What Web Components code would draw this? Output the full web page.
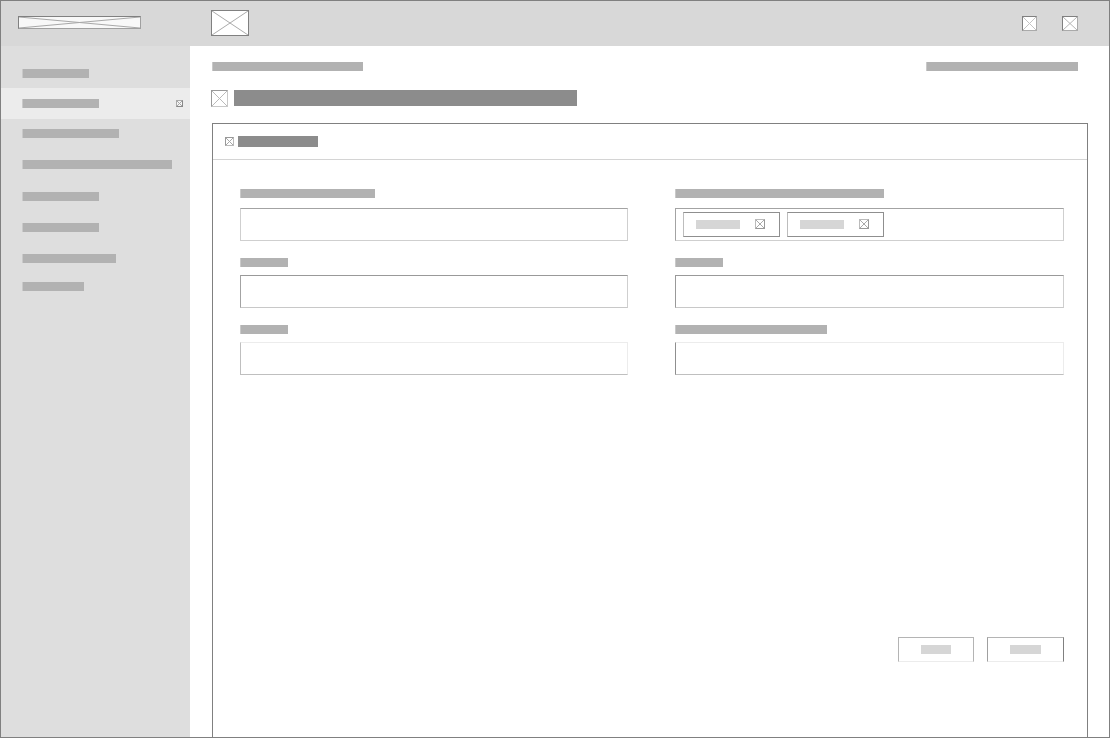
<!DOCTYPE html>
<html>
<head>
<meta charset="utf-8">
<style>
  html, body { margin: 0; padding: 0; background: #fff; font-family: "Liberation Sans", sans-serif; }
</style>
</head>
<body>
<app-shell>
  <app-header slot="header"></app-header>
  <side-nav slot="nav">
    <nav-item height="42" pad="23" bar="67"></nav-item>
    <nav-item height="31" pad="11" bar="77" active></nav-item>
    <nav-item height="31" pad="10" bar="97"></nav-item>
    <nav-item height="31" pad="10" bar="150"></nav-item>
    <nav-item height="31" pad="11" bar="77"></nav-item>
    <nav-item height="31" pad="11" bar="77"></nav-item>
    <nav-item height="31" pad="11" bar="94"></nav-item>
    <nav-item height="31" pad="8" bar="62"></nav-item>
  </side-nav>
  <page-head slot="main"></page-head>
  <form-card slot="main">
    <form-field label="135">
      <box-input top="#a3a3a3" side="#cfcfcf" end="#cfcfcf" bottom="#cfcfcf"></box-input>
    </form-field>
    <form-field label="209">
      <box-input top="#a3a3a3" side="#a3a3a3" end="#cfcfcf" bottom="#cfcfcf">
        <tag-chip bar="44"></tag-chip>
        <tag-chip bar="44"></tag-chip>
      </box-input>
    </form-field>
    <form-field label="48" gap="8" style="margin-top:1px">
      <box-input top="#999" side="#a3a3a3" end="#cfcfcf" bottom="#c8c8c8"></box-input>
    </form-field>
    <form-field label="48" gap="8" style="margin-top:1px">
      <box-input top="#999" side="#999" end="#cfcfcf" bottom="#c8c8c8"></box-input>
    </form-field>
    <form-field label="48" gap="8" style="margin-top:1px">
      <box-input top="#ececec" side="#bfbfbf" end="#ececec" bottom="#bfbfbf"></box-input>
    </form-field>
    <form-field label="152" gap="8" style="margin-top:1px">
      <box-input top="#ececec" side="#8f8f8f" end="#ececec" bottom="#bfbfbf"></box-input>
    </form-field>
    <action-button slot="actions" bar="30" style="margin-right:13px"></action-button>
    <action-button slot="actions" bar="31" strong></action-button>
  </form-card>
</app-shell>

<script>
// grey block standing in for a redacted line of text
class RedactBar extends HTMLElement {
  connectedCallback() {
    if (this.shadowRoot) return;
    const root = this.attachShadow({ mode: "open" });
    const w = this.getAttribute("w");
    const h = this.getAttribute("h") || 9;
    const tone = this.getAttribute("tone");
    // the plain label bars have a soft left edge in the wireframe
    const edge = tone ? "none" : "inset 1px 0 0 rgba(255,255,255,.3)";
    root.innerHTML = `<style>
      :host { display: block; flex: none; width: ${w}px; height: ${h}px; background: ${tone || "#b2b2b2"}; box-shadow: ${edge}; }
    </style>`;
  }
}

// wireframe image placeholder: a box with two crossing lines
class PlaceholderIcon extends HTMLElement {
  connectedCallback() {
    if (this.shadowRoot) return;
    const root = this.attachShadow({ mode: "open" });
    const w = this.getAttribute("w");
    const h = this.getAttribute("h");
    const line = this.getAttribute("line") || "#a8a8a8";
    const fill = this.getAttribute("fill") || "#fff";
    const top = this.getAttribute("top") || "#808080";
    const low = this.getAttribute("low") || "#808080";
    root.innerHTML = `<style>
      :host { display: block; flex: none; width: ${w}px; height: ${h}px; box-sizing: border-box;
        background: ${fill}; border: 1px solid; border-color: ${top} ${low} ${low} ${top}; }
      svg { display: block; width: 100%; height: 100%; }
    </style>
    <svg viewBox="0 0 ${w - 2} ${h - 2}" preserveAspectRatio="none">
      <path d="M0 0L${w - 2} ${h - 2}M${w - 2} 0L0 ${h - 2}" stroke="${line}" stroke-width="1" fill="none"/>
    </svg>`;
  }
}

class AppShell extends HTMLElement {
  constructor() {
    super();
    this.attachShadow({ mode: "open" }).innerHTML = `<style>
      :host { display: grid; box-sizing: border-box; width: 1110px; height: 738px; overflow: hidden;
        border: 1px solid #808080; grid-template: 45px 1fr / 189px 1fr; background: #fff; }
      .top { grid-column: 1 / 3; display: block; }
      .main { display: flex; flex-direction: column; min-height: 0; }
    </style>
    <div class="top"><slot name="header"></slot></div>
    <div><slot name="nav"></slot></div>
    <div class="main"><slot name="main"></slot></div>`;
  }
}

class AppHeader extends HTMLElement {
  constructor() {
    super();
    this.attachShadow({ mode: "open" }).innerHTML = `<style>
      :host { display: flex; align-items: flex-start; height: 45px; background: #d8d8d8; padding: 9px 31px 0 17px; box-sizing: border-box; }
      .logo { margin: 6px 70px 0 0; }
      .spacer { flex: 1; }
      .act { margin-top: 6px; }
      .act + .act { margin-left: 25px; }
    </style>
    <placeholder-icon class="logo" w="123" h="13" low="#a0a0a0" fill="#f8f8f8"></placeholder-icon>
    <placeholder-icon w="38" h="26" line="#aaa"></placeholder-icon>
    <div class="spacer"></div>
    <placeholder-icon class="act" w="15" h="15" line="#c4c4c4" low="#aaa"></placeholder-icon>
    <placeholder-icon class="act" w="16" h="15" line="#b4b4b4" low="#aaa"></placeholder-icon>`;
  }
}

class SideNav extends HTMLElement {
  constructor() {
    super();
    this.attachShadow({ mode: "open" }).innerHTML = `<style>
      :host { display: block; height: 100%; background: #dedede; }
    </style><slot></slot>`;
  }
}

class NavItem extends HTMLElement {
  connectedCallback() {
    if (this.shadowRoot) return;
    const root = this.attachShadow({ mode: "open" });
    const active = this.hasAttribute("active");
    root.innerHTML = `<style>
      :host { display: flex; justify-content: space-between; align-items: flex-start; box-sizing: border-box;
        height: ${this.getAttribute("height")}px; padding: ${this.getAttribute("pad")}px 7px 0 21px;
        background: ${active ? "#ececec" : "transparent"}; }
      .mark { margin-top: 1px; }
    </style>
    <redact-bar w="${this.getAttribute("bar")}"></redact-bar>
    ${active ? '<placeholder-icon class="mark" w="7" h="7" fill="#f4f4f4" top="#aaa" low="#888"></placeholder-icon>' : ""}`;
  }
}

class PageHead extends HTMLElement {
  constructor() {
    super();
    this.attachShadow({ mode: "open" }).innerHTML = `<style>
      :host { display: block; flex: none; padding: 16px 31px 0 21px; }
      .crumbs { display: flex; justify-content: space-between; padding-left: 1px; margin-bottom: 19px; }
      .title { display: flex; gap: 6px; margin-bottom: 16px; }
    </style>
    <div class="crumbs">
      <redact-bar w="151"></redact-bar>
      <redact-bar w="152"></redact-bar>
    </div>
    <div class="title">
      <placeholder-icon w="17" h="17" top="#999" low="#c8c8c8" line="#bbb"></placeholder-icon>
      <redact-bar w="343" h="16" tone="#8c8c8c"></redact-bar>
    </div>`;
  }
}

class FormCard extends HTMLElement {
  constructor() {
    super();
    this.attachShadow({ mode: "open" }).innerHTML = `<style>
      :host { display: flex; flex-direction: column; flex: 1; box-sizing: border-box; width: 876px; margin-left: 22px;
        border: 1px solid #808080; border-bottom: 0; }
      header { display: flex; align-items: center; gap: 4px; height: 36px; padding-left: 12px;
        box-sizing: border-box; border-bottom: 1px solid #d4d4d4; }
      .fields { display: grid; grid-template-columns: 388px 389px; column-gap: 47px; row-gap: 16px; padding: 29px 23px 0 27px; align-content: start; }
      .actions { display: flex; justify-content: flex-end; padding: 262px 23px 0 0; }
    </style>
    <header>
      <placeholder-icon w="9" h="9" top="#999" low="#bbb"></placeholder-icon>
      <redact-bar w="80" h="11" tone="#8c8c8c"></redact-bar>
    </header>
    <div class="fields"><slot></slot></div>
    <div class="actions"><slot name="actions"></slot></div>`;
  }
}

class FormField extends HTMLElement {
  connectedCallback() {
    if (this.shadowRoot) return;
    const root = this.attachShadow({ mode: "open" });
    root.innerHTML = `<style>
      :host { display: flex; flex-direction: column; gap: ${this.getAttribute("gap") || 10}px; }
    </style>
    <redact-bar w="${this.getAttribute("label")}"></redact-bar>
    <slot></slot>`;
  }
}

class BoxInput extends HTMLElement {
  connectedCallback() {
    if (this.shadowRoot) return;
    const root = this.attachShadow({ mode: "open" });
    const a = (n) => this.getAttribute(n);
    root.innerHTML = `<style>
      :host { display: flex; align-items: center; gap: 7px; box-sizing: border-box; height: 33px;
        padding-left: 7px; border: 1px solid; border-color: ${a("top")} ${a("end")} ${a("bottom")} ${a("side")}; }
    </style><slot></slot>`;
  }
}

class TagChip extends HTMLElement {
  connectedCallback() {
    if (this.shadowRoot) return;
    const root = this.attachShadow({ mode: "open" });
    root.innerHTML = `<style>
      :host { display: flex; align-items: center; justify-content: space-between; box-sizing: border-box; width: 97px; height: 25px;
        padding: 0 14px 0 12px; border: 1px solid #8f8f8f; border-left-color: #bdbdbd; }
      .x { margin-bottom: 1px; }
    </style>
    <redact-bar w="${this.getAttribute("bar")}" tone="#d6d6d6"></redact-bar>
    <placeholder-icon class="x" w="10" h="10" top="#bbb" low="#999" line="#aaa"></placeholder-icon>`;
  }
}

class ActionButton extends HTMLElement {
  connectedCallback() {
    if (this.shadowRoot) return;
    const root = this.attachShadow({ mode: "open" });
    const strong = this.hasAttribute("strong");
    root.innerHTML = `<style>
      :host { display: flex; align-items: center; justify-content: center; box-sizing: border-box; width: ${strong ? 77 : 76}px; height: 25px;
        border: 1px solid #b4b4b4; border-bottom-color: #ececec; ${strong ? "border-right-color: #808080; border-left-color: #a0a0a0;" : ""} }
    </style>
    <redact-bar w="${this.getAttribute("bar")}" tone="#d6d6d6"></redact-bar>`;
  }
}

customElements.define("redact-bar", RedactBar);
customElements.define("placeholder-icon", PlaceholderIcon);
customElements.define("app-shell", AppShell);
customElements.define("app-header", AppHeader);
customElements.define("side-nav", SideNav);
customElements.define("nav-item", NavItem);
customElements.define("page-head", PageHead);
customElements.define("form-card", FormCard);
customElements.define("form-field", FormField);
customElements.define("box-input", BoxInput);
customElements.define("tag-chip", TagChip);
customElements.define("action-button", ActionButton);
</script>
</body>
</html>
